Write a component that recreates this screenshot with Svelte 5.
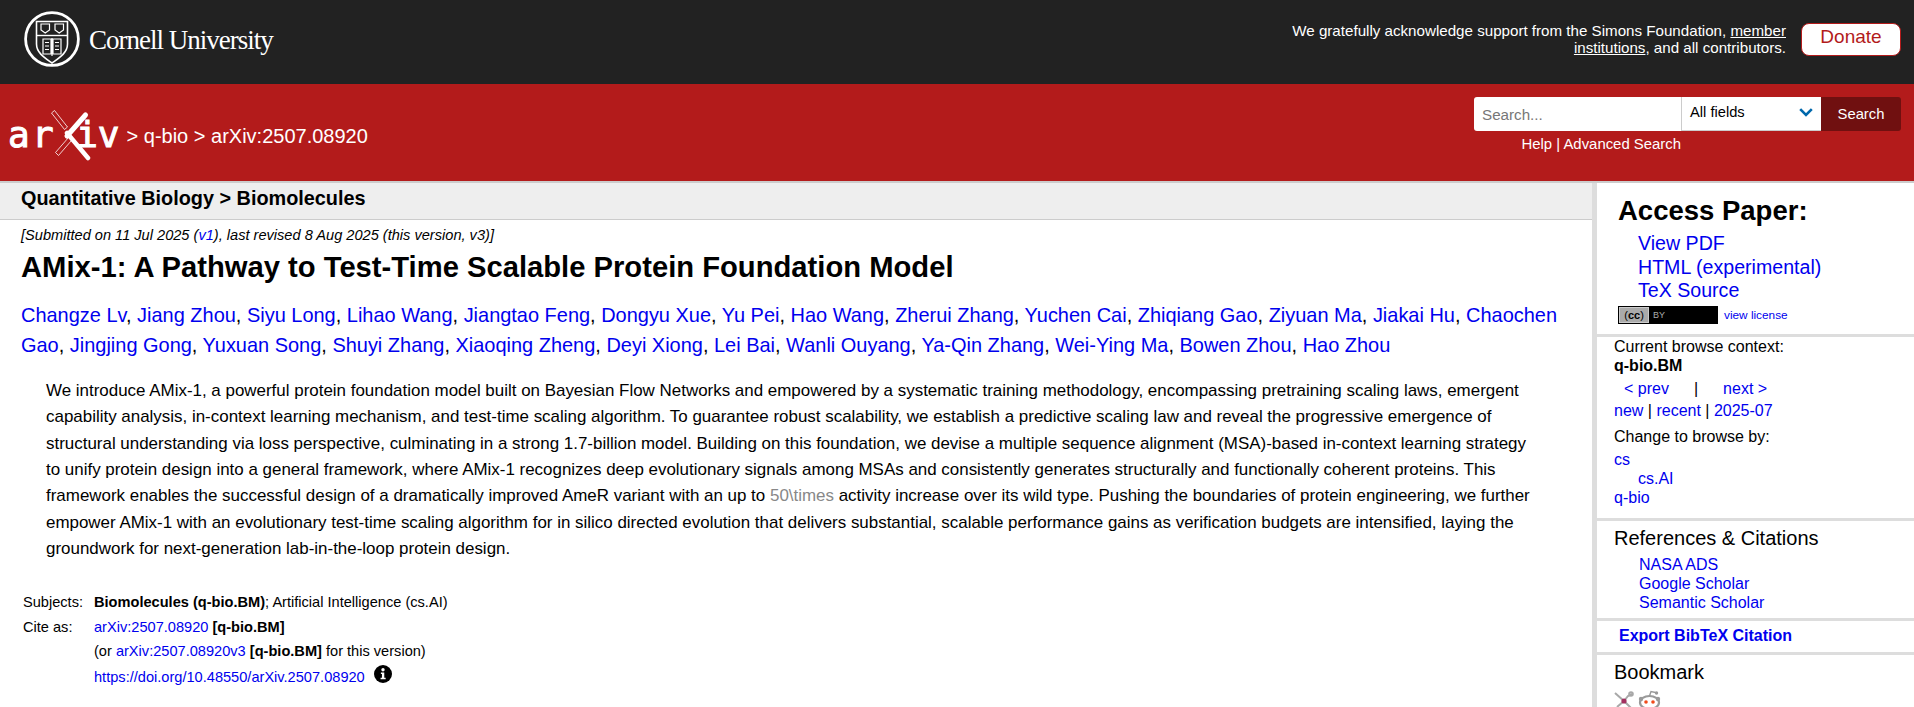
<script>
  const authors = ['Changze Lv','Jiang Zhou','Siyu Long','Lihao Wang','Jiangtao Feng','Dongyu Xue','Yu Pei','Hao Wang','Zherui Zhang','Yuchen Cai','Zhiqiang Gao','Ziyuan Ma','Jiakai Hu','Chaochen Gao','Jingjing Gong','Yuxuan Song','Shuyi Zhang','Xiaoqing Zheng','Deyi Xiong','Lei Bai','Wanli Ouyang','Ya-Qin Zhang','Wei-Ying Ma','Bowen Zhou','Hao Zhou'];
</script>

<div class="identity">
  <a class="cornell" href="#top">
    <svg class="seal" width="56" height="56" viewBox="0 0 56 56" fill="none" stroke="#fff">
      <circle cx="28" cy="28" r="26.4" stroke-width="2.8" />
      <path d="M12.5 10.5H43.5V33C43.5 42 35 47 28 52C21 47 12.5 42 12.5 33Z" stroke-width="1.6" />
      <path d="M12.5 24.5H43.5" stroke-width="1.4" />
      <path d="M17 13H25.5V19L21.2 22L17 19ZM31 13H39.5V19L35.2 22L31 19Z" stroke-width="1.2" />
      <path d="M28 27V45M19 28H27V43H19ZM29 28H37V43H29ZM21 31.5H25M21 35H25M21 38.5H25M31 31.5H35M31 35H35M31 38.5H35" stroke-width="1.2" />
    </svg>
    <span class="wordmark">Cornell University</span>
  </a>
  <div class="support">
    <p>We gratefully acknowledge support from the Simons Foundation, <a href="#top">member institutions</a>, and all contributors.</p>
    <a class="donate" href="#top">Donate</a>
  </div>
</div>

<header class="banner">
  <div class="crumbs">
    <span class="logo">
      <span class="lg">ar</span><svg class="x" width="40" height="60" viewBox="0 0 40 60" fill="none">
        <path d="M3.5 4.5L16.5 21L13.5 23.5L0.5 7ZM4.5 46.5L17.5 31.5L20.5 34.5L7.5 49.5Z" stroke="#fff" stroke-width="0.8" />
        <path d="M34.5 9L16 30" stroke="#fff" stroke-width="5" stroke-linecap="round" />
        <path d="M16 27L37 52" stroke="#fff" stroke-width="4.5" stroke-linecap="round" />
      </svg><span class="lg iv">iv</span>
    </span>
    <span class="path">&gt; <a href="#top">q-bio</a> &gt; arXiv:2507.08920</span>
  </div>
  <div class="search-box">
    <form class="search-row" onsubmit={(e) => e.preventDefault()}>
      <input type="text" placeholder="Search..." />
      <div class="fields">
        <span>All fields</span>
        <svg width="14" height="9" viewBox="0 0 14 9" fill="none"><path d="M1.2 1.2L7 7L12.8 1.2" stroke="#0068ac" stroke-width="2.6" /></svg>
      </div>
      <button type="submit">Search</button>
    </form>
    <div class="help"><a href="#top">Help</a> | <a href="#top">Advanced Search</a></div>
  </div>
</header>

<div class="layout">
  <main>
    <div class="subheader"><h1>Quantitative Biology &gt; Biomolecules</h1></div>
    <div class="content">
      <div class="dateline">[Submitted on 11 Jul 2025 (<a href="#top">v1</a>), last revised 8 Aug 2025 (this version, v3)]</div>
      <h2 class="title">AMix-1: A Pathway to Test-Time Scalable Protein Foundation Model</h2>
      <div class="authors">
        {#each authors as name, i}<a href="#top">{name}</a>{i < authors.length - 1 ? ', ' : ''}{/each}
      </div>
      <blockquote>We introduce AMix-1, a powerful protein foundation model built on Bayesian Flow Networks and empowered by a systematic training methodology, encompassing pretraining scaling laws, emergent capability analysis, in-context learning mechanism, and test-time scaling algorithm. To guarantee robust scalability, we establish a predictive scaling law and reveal the progressive emergence of structural understanding via loss perspective, culminating in a strong 1.7-billion model. Building on this foundation, we devise a multiple sequence alignment (MSA)-based in-context learning strategy<br />to unify protein design into a general framework, where AMix-1 recognizes deep evolutionary signals among MSAs and consistently generates structurally and functionally coherent proteins. This framework enables the successful design of a dramatically improved AmeR variant with an up to <span class="tex">50\times</span> activity increase over its wild type. Pushing the boundaries of protein engineering, we further empower AMix-1 with an evolutionary test-time scaling algorithm for in silico directed evolution that delivers substantial, scalable performance gains as verification budgets are intensified, laying the groundwork for next-generation lab-in-the-loop protein design.</blockquote>
      <table class="meta">
        <tbody>
          <tr><td class="label">Subjects:</td><td><b>Biomolecules (q-bio.BM)</b>; Artificial Intelligence (cs.AI)</td></tr>
          <tr><td class="label">Cite as:</td><td><a href="#top">arXiv:2507.08920</a> <b>[q-bio.BM]</b></td></tr>
          <tr><td></td><td>(or <a href="#top">arXiv:2507.08920v3</a> <b>[q-bio.BM]</b> for this version)</td></tr>
          <tr><td></td><td><a href="#top">https://doi.org/10.48550/arXiv.2507.08920</a>
            <svg class="info" width="18" height="18" viewBox="0 0 17 17"><circle cx="8.5" cy="8.5" r="8.5" fill="#000" /><circle cx="8.5" cy="4.5" r="1.6" fill="#fff" /><path d="M6.5 7H9.7V12H11V13.5H6.2V12H7.5V8.5H6.5Z" fill="#fff" /></svg>
          </td></tr>
        </tbody>
      </table>
    </div>
  </main>

  <aside>
    <section class="access">
      <h2>Access Paper:</h2>
      <ul>
        <li><a href="#top">View PDF</a></li>
        <li><a href="#top">HTML (experimental)</a></li>
        <li><a href="#top">TeX Source</a></li>
      </ul>
      <div class="license">
        <span class="cc"><span class="cc-left">(<b>cc</b>)</span><span class="cc-by">BY</span></span>
        <a href="#top">view license</a>
      </div>
    </section>
    <section class="browse">
      <div>Current browse context:</div>
      <div class="ctx">q-bio.BM</div>
      <div class="nav"><a href="#top">&lt; prev</a><span class="sep">|</span><a href="#top">next &gt;</a></div>
      <div class="links"><a href="#top">new</a> | <a href="#top">recent</a> | <a href="#top">2025-07</a></div>
      <div class="change">Change to browse by:</div>
      <div class="cats">
        <a href="#top">cs</a>
        <a class="sub" href="#top">cs.AI</a>
        <a href="#top">q-bio</a>
      </div>
    </section>
    <section class="refs">
      <h3>References &amp; Citations</h3>
      <a href="#top">NASA ADS</a>
      <a href="#top">Google Scholar</a>
      <a href="#top">Semantic Scholar</a>
    </section>
    <section class="bibtex"><a href="#top">Export BibTeX Citation</a></section>
    <section class="bookmark">
      <h3>Bookmark</h3>
      <div class="marks">
        <svg width="20" height="20" viewBox="0 0 20 20" fill="none" stroke="#a8a8a8" stroke-width="2"><path d="M1 3L10 11L14 6L18 4M10 11L3 17M10 11L17 18" /><circle cx="17" cy="4" r="1.8" /><circle cx="10" cy="11" r="2.6" fill="#a33060" stroke="none" /></svg>
        <svg width="23" height="20" viewBox="0 0 23 20"><ellipse cx="11.5" cy="12.5" rx="9.5" ry="6.5" fill="#fff" stroke="#999" stroke-width="2.2" /><circle cx="3" cy="9" r="2.2" fill="#999" /><circle cx="20" cy="9" r="2.2" fill="#999" /><circle cx="8" cy="12" r="1.8" fill="#f04a1a" /><circle cx="15" cy="12" r="1.8" fill="#f04a1a" /><path d="M11.5 6L13 1.5L17.5 2.5" fill="none" stroke="#999" stroke-width="1.4" /><circle cx="18.5" cy="3" r="1.7" fill="#999" /></svg>
      </div>
    </section>
  </aside>
</div>

<style>
  :global(body) {
    margin: 0;
    overflow: hidden;
    font-family: "Liberation Sans", Arial, sans-serif;
    font-size: 14px;
    color: #000;
  }
  a {
    color: #0000ee;
    text-decoration: none;
  }

  .identity {
    height: 84px;
    background: #222;
    display: flex;
    align-items: center;
    justify-content: space-between;
    padding: 0 13px 0 24px;
    box-sizing: border-box;
  }
  .cornell {
    display: flex;
    align-items: center;
    gap: 9px;
    margin-top: -6px;
  }
  .seal {
    flex: none;
  }
  .wordmark {
    font-family: "Liberation Serif", serif;
    font-size: 27px;
    letter-spacing: -1px;
    margin-top: 2px;
    color: #fff;
  }
  .support {
    display: flex;
    align-items: center;
    gap: 15px;
    margin-top: -6px;
  }
  .support p {
    margin: 0;
    width: 510px;
    text-align: right;
    color: #fff;
    font-size: 15.15px;
    line-height: 17px;
  }
  .support p a {
    color: #fff;
    text-decoration: underline;
  }
  .donate {
    display: block;
    box-sizing: border-box;
    width: 100px;
    height: 33px;
    line-height: 25px;
    text-align: center;
    background: #fff;
    color: #b31b1b;
    border: 1px solid #b31b1b;
    border-radius: 8px;
    font-size: 19px;
  }

  .banner {
    height: 97px;
    background: #b31b1b;
    display: flex;
    justify-content: space-between;
    padding: 13px 13px 0 8px;
    box-sizing: border-box;
  }
  .crumbs {
    display: flex;
    align-items: center;
    height: 78px;
  }
  .logo {
    display: flex;
    align-items: center;
    color: #fff;
    font-family: "DejaVu Sans Mono", monospace;
    -webkit-text-stroke: 1px #fff;
  }
  .lg {
    font-size: 36px;
    letter-spacing: 2.4px;
    line-height: 60px;
    margin-top: -2px;
  }
  .iv {
    letter-spacing: 0;
  }
  .x {
    margin: 0 -15px 0 -5px;
  }
  .path {
    margin-left: 7px;
    font-size: 20px;
    color: #fff;
  }
  .path a {
    color: #fff;
  }
  .search-box {
    display: flex;
    flex-direction: column;
  }
  .search-row {
    display: flex;
    height: 34px;
    margin: 0;
  }
  .search-row input {
    width: 207px;
    box-sizing: border-box;
    border: 0;
    border-radius: 3px 0 0 3px;
    padding: 0 8px;
    font: 15.2px "Liberation Sans", Arial, sans-serif;
    outline: none;
  }
  .search-row input::placeholder {
    color: #777;
  }
  .fields {
    width: 140px;
    box-sizing: border-box;
    background: #fff;
    border-left: 1px solid #ccc;
    border-bottom: 1px solid #ccc;
    display: flex;
    align-items: center;
    justify-content: space-between;
    padding: 0 8px 3px 8px;
    font-size: 14.7px;
  }
  .search-row button {
    width: 80px;
    border: 0;
    background: #701010;
    color: #fff;
    border-radius: 0 3px 3px 0;
    padding: 0;
    font: 14.8px "Liberation Sans", Arial, sans-serif;
  }
  .help {
    width: 207px;
    margin-top: 3px;
    text-align: right;
    color: #fff;
    font-size: 14.9px;
    line-height: 20px;
  }
  .help a {
    color: #fff;
  }

  .layout {
    display: flex;
    border-top: 2px solid #ccc;
  }
  main {
    flex: 1;
    min-width: 0;
    border-right: 5px solid #ddd;
  }
  .subheader {
    height: 37px;
    box-sizing: border-box;
    background: #eee;
    border-bottom: 1px solid #ccc;
    padding: 4px 21px 0;
  }
  .subheader h1 {
    margin: 0;
    font-size: 19.85px;
    line-height: 22px;
    font-weight: 700;
  }
  .content {
    padding: 6.5px 21px 0;
  }
  .dateline {
    font-style: italic;
    font-size: 14.6px;
    line-height: 17px;
  }
  .title {
    margin: 5.5px 0 0;
    font-size: 29.2px;
    line-height: 36px;
    font-weight: 700;
  }
  .authors {
    margin-top: 15px;
    font-size: 19.97px;
    line-height: 30px;
  }
  blockquote {
    margin: 18px 10px 0 25px;
    font-size: 16.95px;
    line-height: 26.33px;
  }
  .tex {
    color: #888;
  }
  .meta {
    margin-top: 28px;
    border-collapse: collapse;
    font-size: 14.6px;
  }
  .meta td {
    padding: 0;
    height: 24.3px;
    vertical-align: middle;
  }
  .meta .label {
    padding: 0 0 0 2px;
    width: 71px;
  }
  .info {
    margin-left: 5px;
    vertical-align: -1px;
  }

  aside {
    width: 317px;
    flex: none;
  }
  aside section {
    border-bottom: 3px solid #ddd;
    padding-left: 17px;
  }
  .access {
    height: 154px;
    box-sizing: border-box;
    padding: 12px 0 0 21px;
  }
  .access h2 {
    margin: 0;
    font-size: 27.5px;
    line-height: 32px;
    font-weight: 700;
  }
  .access ul {
    list-style: none;
    margin: 5px 0 0;
    padding: 0 0 0 20px;
    font-size: 19.6px;
    line-height: 23.5px;
  }
  .license {
    display: flex;
    align-items: center;
    gap: 6px;
    margin-top: 3px;
    font-size: 11.8px;
  }
  .cc {
    display: flex;
    align-items: center;
    width: 100px;
    height: 18px;
    box-sizing: border-box;
    background: #000;
    border: 1px solid #000;
    outline: 0;
    font-size: 11px;
  }
  .cc-left {
    width: 30px;
    height: 16px;
    background: #aaa;
    color: #000;
    line-height: 14px;
    text-align: center;
    white-space: nowrap;
    border: 1px solid #ccc;
    box-sizing: border-box;
  }
  .cc-by {
    margin-left: 4px;
    font-size: 9px;
    color: #aaa;
  }
  .browse {
    height: 184px;
    box-sizing: border-box;
    font-size: 16px;
    line-height: 19px;
  }
  .ctx {
    font-weight: 700;
  }
  .nav {
    margin-top: 4px;
    padding-left: 10px;
    line-height: 20px;
  }
  .sep {
    margin: 0 25px;
  }
  .links {
    margin-top: 2px;
    line-height: 20px;
  }
  .change {
    margin-top: 6px;
  }
  .cats {
    margin-top: 4px;
    display: flex;
    flex-direction: column;
  }
  .cats .sub {
    padding-left: 24px;
  }
  .refs {
    height: 100px;
    box-sizing: border-box;
    padding-top: 5px;
    display: flex;
    flex-direction: column;
    font-size: 16px;
    line-height: 19px;
  }
  .refs a {
    padding-left: 25px;
  }
  aside h3 {
    margin: 0;
    font-size: 20px;
    font-weight: 400;
    line-height: 24px;
  }
  .refs h3 {
    margin-bottom: 5px;
  }
  .bibtex {
    height: 34px;
    box-sizing: border-box;
    padding: 5px 0 0 22px;
    font-size: 16px;
    font-weight: 700;
    line-height: 19px;
  }
  .bookmark {
    padding-top: 5px;
  }
  .marks {
    display: flex;
    gap: 4px;
    margin-top: 6px;
  }
</style>
